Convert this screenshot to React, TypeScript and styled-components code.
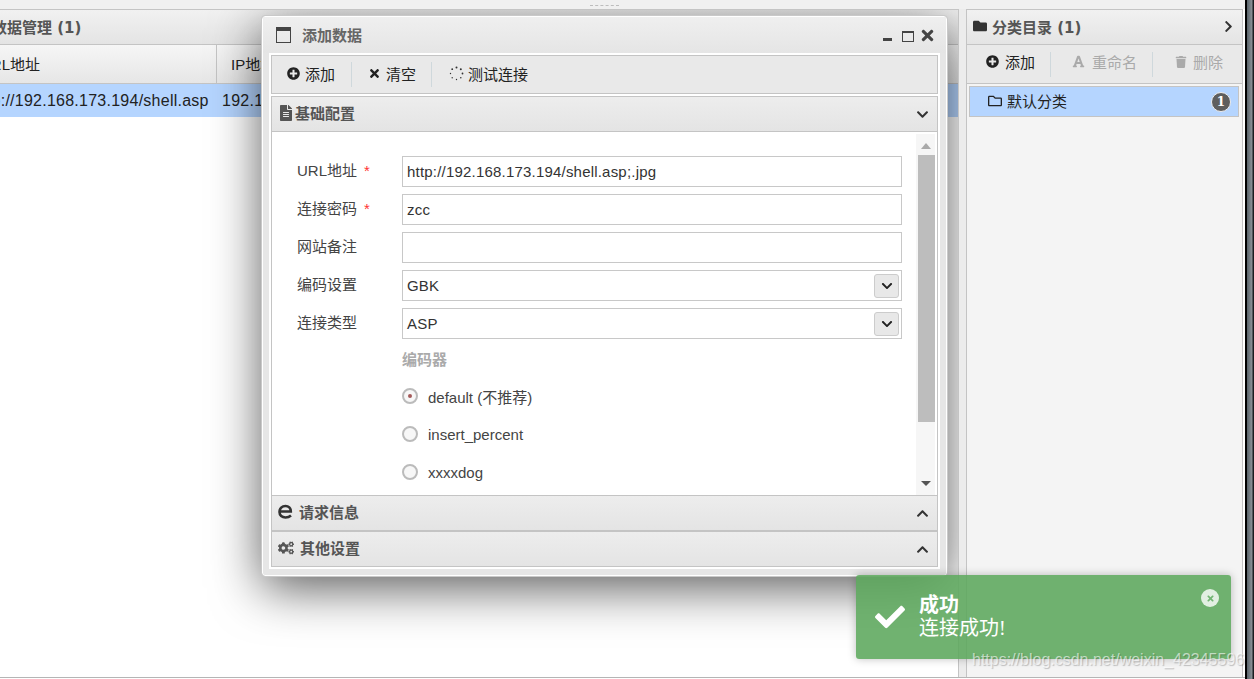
import React from "react";
import styled, { createGlobalStyle } from "styled-components";
import {
  FaPlusCircle,
  FaTimes,
  FaFileAlt,
  FaChevronDown,
  FaChevronUp,
  FaChevronRight,
  FaFolder,
  FaRegFolder,
  FaFont,
  FaTrash,
  FaCogs,
  FaCheck,
} from "react-icons/fa";

const GlobalStyle = createGlobalStyle`
  html, body {
    margin: 0;
    height: 100%;
    overflow: hidden;
    background: #fff;
    font-family: "Liberation Sans", "Noto Sans CJK SC", sans-serif;
    font-size: 15px;
    color: #222;
  }
`;

const Page = styled.div`
  position: relative;
  width: 1254px;
  height: 679px;
  display: flex;
  overflow: hidden;
`;

const MainColumn = styled.div`
  width: 1245px;
  flex: none;
  display: flex;
  flex-direction: column;
  background: #fff;
  padding-bottom: 1px;
  box-sizing: border-box;
`;

const WindowEdge = styled.div`
  flex: 1;
  background: linear-gradient(90deg, #000 0 2px, #59636a 2px, #8a9196 7px, #1a1d20 8px);
`;

const TopStrip = styled.div`
  height: 9px;
  flex: none;
  background: #f0f0f0;
  display: flex;
  justify-content: center;
  padding: 5px 36px 0 0;
  box-sizing: border-box;
`;

const Grip = styled.div`
  width: 29px;
  height: 1px;
  border-top: 1px dashed #bdbdbd;
`;

const Workspace = styled.div`
  flex: 1;
  display: flex;
  background: #fff;
  border-bottom: 1px solid #b5b5b5;
  min-height: 0;
`;

const LeftPanel = styled.div`
  position: relative;
  width: 959px;
  flex: none;
  overflow: hidden;
  display: flex;
  flex-direction: column;
  border-top: 1px solid #c4c4c4;
  border-right: 1px solid #c4c4c4;
  box-sizing: border-box;
`;

const PanelHeader = styled.div`
  height: 35px;
  flex: none;
  display: flex;
  align-items: center;
  justify-content: space-between;
  box-sizing: border-box;
  padding: 0 7px 2px 6px;
  background: linear-gradient(#f1f1f1, #e4e4e4);
  border-bottom: 1px solid #c4c4c4;
`;

const HeaderTitle = styled.span<{ $shift?: number }>`
  display: flex;
  align-items: center;
  gap: 5px;
  margin-left: ${({ $shift }) => $shift ?? 0}px;
  white-space: nowrap;
  font-family: "DejaVu Sans", "Noto Sans CJK SC", sans-serif;
  font-weight: bold;
  color: #555;
`;

const GridHead = styled.div`
  height: 39px;
  flex: none;
  display: flex;
  background: linear-gradient(#f6f6f6, #e6e6e6);
  border-bottom: 1px solid #c4c4c4;
  box-sizing: border-box;
`;

const HeadCell = styled.div<{ $width: number; $pad: number }>`
  width: ${({ $width }) => $width}px;
  flex: none;
  box-sizing: border-box;
  padding: 0 0 2px ${({ $pad }) => $pad}px;
  display: flex;
  align-items: center;
  border-right: 1px solid #c4c4c4;
  white-space: nowrap;
  overflow: hidden;
`;

const GridRow = styled.div`
  height: 33px;
  flex: none;
  display: flex;
  align-items: center;
  background: #b5d5ff;
  white-space: nowrap;
  overflow: hidden;
  font-size: 16px;
  letter-spacing: 0.25px;
`;

const RowCell = styled.div<{ $width: number; $pad: number }>`
  width: ${({ $width }) => $width}px;
  flex: none;
  box-sizing: border-box;
  padding-left: ${({ $pad }) => $pad}px;
  overflow: hidden;
`;

const ClippedText = styled.span<{ $shift: number }>`
  display: block;
  margin-left: ${({ $shift }) => $shift}px;
`;

const Splitter = styled.div`
  width: 7px;
  flex: none;
  background: #ececec;
`;

const RightPanel = styled.div`
  width: 277px;
  flex: none;
  background: #f4f4f4;
  display: flex;
  flex-direction: column;
  border: 1px solid #c4c4c4;
  border-bottom: none;
  box-sizing: border-box;
`;

const Toolbar = styled.div`
  height: 39px;
  flex: none;
  display: flex;
  align-items: center;
  box-sizing: border-box;
  background: #e9e9e9;
  border: 1px solid #c4c4c4;
`;

const RightToolbar = styled(Toolbar)`
  border-width: 0 0 1px;
`;

const ToolButton = styled.div<{ $disabled?: boolean; $width: number; $pad: number; $gap: number }>`
  width: ${({ $width }) => $width}px;
  height: 25px;
  display: flex;
  align-items: center;
  gap: ${({ $gap }) => $gap}px;
  box-sizing: border-box;
  padding: 0 0 3px ${({ $pad }) => $pad}px;
  color: ${({ $disabled }) => ($disabled ? "#aaa" : "#222")};
  border-right: 1px solid #cfd8dc;
  white-space: nowrap;

  &:last-child {
    border-right: none;
  }

  ${RightToolbar} & {
    padding-bottom: 5px;
  }
`;

const TreeItem = styled.div`
  height: 31px;
  margin: 2px 3px 0 2px;
  display: flex;
  align-items: center;
  justify-content: space-between;
  box-sizing: border-box;
  padding: 0 7px 0 18px;
  background: #b5d5ff;
  border: 1px solid #c4c4c4;
`;

const TreeLabel = styled.span`
  display: flex;
  align-items: center;
  gap: 5px;
  padding-bottom: 2px;
`;

const Badge = styled.span`
  width: 20px;
  height: 20px;
  border-radius: 50%;
  background: #5e5e5e;
  border: 1px solid #eee;
  box-sizing: border-box;
  color: #fff;
  font-family: "DejaVu Serif", serif;
  font-size: 12px;
  font-weight: bold;
  display: flex;
  align-items: center;
  justify-content: center;
`;

const Modal = styled.div`
  position: absolute;
  left: 262px;
  top: 6px;
  width: 685px;
  height: 560px;
  box-sizing: border-box;
  padding: 0 6px 6px;
  background: #e6e6e6;
  border: 1px solid #fff;
  outline: 1px solid #c9c9c9;
  outline-offset: 0;
  border-radius: 3px;
  box-shadow: 0 12px 50px rgba(0, 0, 0, 0.65);
  display: flex;
  flex-direction: column;
  z-index: 5;
`;

const ModalTitle = styled.div`
  height: 36px;
  flex: none;
  box-sizing: border-box;
  margin: 0 -6px;
  padding: 0 10px 2px 13px;
  background: linear-gradient(#efefef, #e5e5e5);
  display: flex;
  align-items: center;
  justify-content: space-between;
  color: #666;
  font-weight: bold;
`;

const TitleText = styled.span`
  display: flex;
  align-items: center;
  gap: 11px;

  svg {
    margin-top: 2px;
  }
`;

const WindowActions = styled.span`
  display: flex;
  align-items: center;
  gap: 10px;
  padding-top: 2px;
  color: #444;
`;

const MinIcon = styled.span`
  width: 9px;
  height: 3px;
  margin-top: 9px;
  background: #444;
`;

const MaxIcon = styled.span`
  width: 10px;
  height: 8px;
  margin: 2px -5px 0 0;
  border: 1px solid #444;
  border-top-width: 2px;
`;

const ModalBody = styled.div`
  flex: 1;
  min-height: 0;
  display: flex;
  flex-direction: column;
  padding: 2px;
  background: #fff;
`;

const AccordionHead = styled.div<{ $gapTop?: number }>`
  height: 36px;
  flex: none;
  margin-top: ${({ $gapTop }) => $gapTop ?? 0}px;
  box-sizing: border-box;
  display: flex;
  align-items: center;
  justify-content: space-between;
  padding: 0 8px 0 6px;
  background: linear-gradient(#ededed, #e4e4e4);
  border: 1px solid #c4c4c4;
  font-weight: bold;
  color: #555;
`;

const AccordionTitle = styled.span<{ $gap: number }>`
  display: flex;
  align-items: center;
  gap: ${({ $gap }) => $gap}px;
  padding-bottom: 3px;
`;

const ChevronBox = styled.span`
  display: flex;
  color: #333;
`;

const FormPane = styled.div`
  flex: 1;
  min-height: 0;
  position: relative;
  border-left: 1px solid #c4c4c4;
  border-right: 1px solid #c4c4c4;
  display: flex;
  overflow: hidden;
`;

const FormScroll = styled.div`
  flex: 1;
  min-width: 0;
  box-sizing: border-box;
  padding: 24px 14px 0 25px;
  display: flex;
  flex-direction: column;
  gap: 7px;
`;

const FormRow = styled.div`
  display: flex;
  align-items: center;
  height: 31px;
  flex: none;
`;

const FieldLabel = styled.div`
  width: 105px;
  flex: none;
  color: #444;
  white-space: nowrap;
  padding-bottom: 5px;
`;

const Required = styled.span`
  color: #f33;
  margin-left: 7px;
`;

const FieldBox = styled.div`
  flex: 1;
  height: 31px;
  box-sizing: border-box;
  border: 1px solid #c8c8c8;
  background: #fff;
  padding: 0 2px 0 4px;
  display: flex;
  align-items: center;
  justify-content: space-between;
  color: #333;
  letter-spacing: 0.2px;
`;

const SelectArrow = styled.span`
  width: 25px;
  height: 24px;
  box-sizing: border-box;
  border: 1px solid #ccc;
  border-radius: 3px;
  background: #e8e8e8;
  display: flex;
  align-items: center;
  justify-content: center;
  color: #222;
`;

const GroupBlock = styled.div`
  margin: -2px 0 0 105px;
  display: flex;
  flex-direction: column;
`;

const GroupLabel = styled.div`
  height: 28px;
  flex: none;
  margin-bottom: 4px;
  padding-bottom: 1px;
  display: flex;
  align-items: center;
  color: #aaa;
  font-weight: bold;
`;

const RadioRow = styled.div`
  height: 38px;
  flex: none;
  display: flex;
  align-items: center;
  gap: 10px;
  color: #444;
`;

const RadioDot = styled.span<{ $checked?: boolean }>`
  width: 16px;
  height: 16px;
  box-sizing: border-box;
  border-radius: 50%;
  border: 2px solid #bbb;
  background: #f7f7f7;
  display: flex;
  align-items: center;
  justify-content: center;

  &::after {
    content: "";
    width: 4px;
    height: 4px;
    border-radius: 50%;
    background: ${({ $checked }) => ($checked ? "#a45a5a" : "transparent")};
  }
`;

const ScrollTrack = styled.div`
  width: 19px;
  flex: none;
  margin: 2px 2px 0 0;
  background: #f6f6f6;
  display: flex;
  flex-direction: column;
  align-items: flex-end;
`;

const ScrollArrow = styled.span<{ $down?: boolean }>`
  width: 0;
  height: 0;
  margin: 9px 4px 6px 0;
  border-left: 5px solid transparent;
  border-right: 5px solid transparent;
  ${({ $down }) =>
    $down
      ? "border-top: 5px solid #555; margin-top: auto; margin-bottom: 9px;"
      : "border-bottom: 6px solid #aaa;"}
`;

const ScrollThumb = styled.div`
  width: 17px;
  height: 267px;
  flex: none;
  background: #bdbdbd;
`;

const Toast = styled.div`
  position: absolute;
  left: 856px;
  top: 575px;
  width: 375px;
  height: 84px;
  border-radius: 3px;
  background: rgba(92, 167, 92, 0.88);
  box-shadow: 0 0 8px rgba(0, 0, 0, 0.25);
  color: #fff;
  display: flex;
  align-items: center;
  padding-left: 19px;
  box-sizing: border-box;
  gap: 14px;
  z-index: 10;
`;

const ToastText = styled.div`
  font-family: "Liberation Serif", "Noto Sans CJK SC", serif;
  font-size: 20px;
  line-height: 23px;
`;

const ToastTitle = styled.div`
  font-weight: bold;
`;

const ToastClose = styled.span`
  position: absolute;
  right: 12px;
  top: 14px;
  width: 18px;
  height: 18px;
  border-radius: 50%;
  background: rgba(255, 255, 255, 0.8);
  color: #72b573;
  display: flex;
  align-items: center;
  justify-content: center;
`;

const Watermark = styled.div`
  position: absolute;
  left: 972px;
  top: 651px;
  font-size: 16px;
  line-height: 18px;
  color: rgba(255, 255, 255, 0.6);
  text-shadow: 1px 1px 1px rgba(0, 0, 0, 0.22);
  white-space: nowrap;
  z-index: 11;
`;

const WindowIcon = () => (
  <svg width="15" height="16" viewBox="0 0 15 16">
    <rect x="0.5" y="0.5" width="14" height="15" fill="none" stroke="#444" />
    <rect x="0" y="0" width="15" height="4" fill="#444" />
  </svg>
);

const EdgeIcon = () => (
  <svg width="15" height="15" viewBox="0 0 15 15" fill="none" stroke="#333" strokeWidth="2.6">
    <path d="M2 7.5H12.8C12.8 4 10.5 2 7.5 2C4 2 1.5 4.5 1.5 8C1.5 11.5 4 13.5 7.5 13.5C9.8 13.5 11.6 12.8 13 11.6" />
  </svg>
);

const DotSpinner = () => (
  <svg width="15" height="15" viewBox="0 0 15 15" fill="#333">
    <circle cx="7.5" cy="1.5" r="1" />
    <circle cx="11.8" cy="3.2" r="1" />
    <circle cx="13.5" cy="7.5" r="0.9" />
    <circle cx="11.8" cy="11.8" r="0.8" />
    <circle cx="7.5" cy="13.5" r="0.7" />
    <circle cx="3.2" cy="11.8" r="0.7" />
    <circle cx="1.5" cy="7.5" r="0.7" />
    <circle cx="3.2" cy="3.2" r="0.9" />
  </svg>
);

const App: React.FC = () => {
  return (
    <Page>
      <GlobalStyle />
      <MainColumn>
        <TopStrip>
          <Grip />
        </TopStrip>
        <Workspace>
          <LeftPanel>
            <PanelHeader>
              <HeaderTitle $shift={-14}>数据管理 (1)</HeaderTitle>
            </PanelHeader>
            <GridHead>
              <HeadCell $width={217} $pad={0}>
                <ClippedText $shift={-20}>URL地址</ClippedText>
              </HeadCell>
              <HeadCell $width={200} $pad={14}>
                IP地址
              </HeadCell>
            </GridHead>
            <GridRow>
              <RowCell $width={217} $pad={0}>
                <ClippedText $shift={-27}>http://192.168.173.194/shell.asp</ClippedText>
              </RowCell>
              <RowCell $width={200} $pad={5}>
                192.168.173.194
              </RowCell>
            </GridRow>
            <Modal>
              <ModalTitle>
                <TitleText>
                  <WindowIcon />
                  添加数据
                </TitleText>
                <WindowActions>
                  <MinIcon />
                  <MaxIcon />
                  <FaTimes size={17} />
                </WindowActions>
              </ModalTitle>
              <ModalBody>
                <Toolbar>
                  <ToolButton $width={80} $pad={15} $gap={5}>
                    <FaPlusCircle size={13} />
                    添加
                  </ToolButton>
                  <ToolButton $width={80} $pad={16} $gap={5}>
                    <FaTimes size={13} />
                    清空
                  </ToolButton>
                  <ToolButton $width={115} $pad={17} $gap={4}>
                    <DotSpinner />
                    测试连接
                  </ToolButton>
                </Toolbar>
                <AccordionHead $gapTop={2}>
                  <AccordionTitle $gap={1}>
                    <FaFileAlt size={16} />
                    基础配置
                  </AccordionTitle>
                  <ChevronBox>
                    <FaChevronDown size={13} />
                  </ChevronBox>
                </AccordionHead>
                <FormPane>
                  <FormScroll>
                    <FormRow>
                      <FieldLabel>
                        URL地址<Required>*</Required>
                      </FieldLabel>
                      <FieldBox>http://192.168.173.194/shell.asp;.jpg</FieldBox>
                    </FormRow>
                    <FormRow>
                      <FieldLabel>
                        连接密码<Required>*</Required>
                      </FieldLabel>
                      <FieldBox>zcc</FieldBox>
                    </FormRow>
                    <FormRow>
                      <FieldLabel>网站备注</FieldLabel>
                      <FieldBox />
                    </FormRow>
                    <FormRow>
                      <FieldLabel>编码设置</FieldLabel>
                      <FieldBox>
                        GBK
                        <SelectArrow>
                          <FaChevronDown size={12} />
                        </SelectArrow>
                      </FieldBox>
                    </FormRow>
                    <FormRow>
                      <FieldLabel>连接类型</FieldLabel>
                      <FieldBox>
                        ASP
                        <SelectArrow>
                          <FaChevronDown size={12} />
                        </SelectArrow>
                      </FieldBox>
                    </FormRow>
                    <GroupBlock>
                      <GroupLabel>编码器</GroupLabel>
                      <RadioRow>
                        <RadioDot $checked />
                        default (不推荐)
                      </RadioRow>
                      <RadioRow>
                        <RadioDot />
                        insert_percent
                      </RadioRow>
                      <RadioRow>
                        <RadioDot />
                        xxxxdog
                      </RadioRow>
                    </GroupBlock>
                  </FormScroll>
                  <ScrollTrack>
                    <ScrollArrow />
                    <ScrollThumb />
                    <ScrollArrow $down />
                  </ScrollTrack>
                </FormPane>
                <AccordionHead>
                  <AccordionTitle $gap={6}>
                    <EdgeIcon />
                    请求信息
                  </AccordionTitle>
                  <ChevronBox>
                    <FaChevronUp size={13} />
                  </ChevronBox>
                </AccordionHead>
                <AccordionHead>
                  <AccordionTitle $gap={6}>
                    <FaCogs size={16} />
                    其他设置
                  </AccordionTitle>
                  <ChevronBox>
                    <FaChevronUp size={13} />
                  </ChevronBox>
                </AccordionHead>
              </ModalBody>
            </Modal>
          </LeftPanel>
          <Splitter />
          <RightPanel>
            <PanelHeader>
              <HeaderTitle>
                <FaFolder size={14} color="#333" />
                分类目录 (1)
              </HeaderTitle>
              <FaChevronRight size={13} color="#333" />
            </PanelHeader>
            <RightToolbar>
              <ToolButton $width={84} $pad={19} $gap={6}>
                <FaPlusCircle size={13} />
                添加
              </ToolButton>
              <ToolButton $width={102} $pad={21} $gap={7} $disabled>
                <FaFont size={13} />
                重命名
              </ToolButton>
              <ToolButton $width={80} $pad={22} $gap={6} $disabled>
                <FaTrash size={12} />
                删除
              </ToolButton>
            </RightToolbar>
            <TreeItem>
              <TreeLabel>
                <FaRegFolder size={14} />
                默认分类
              </TreeLabel>
              <Badge>1</Badge>
            </TreeItem>
          </RightPanel>
        </Workspace>
      </MainColumn>
      <WindowEdge />
      <Toast>
        <FaCheck size={30} />
        <ToastText>
          <ToastTitle>成功</ToastTitle>
          <div>连接成功!</div>
        </ToastText>
        <ToastClose>
          <FaTimes size={9} />
        </ToastClose>
      </Toast>
      <Watermark>https://blog.csdn.net/weixin_42345596</Watermark>
    </Page>
  );
};

export default App;
